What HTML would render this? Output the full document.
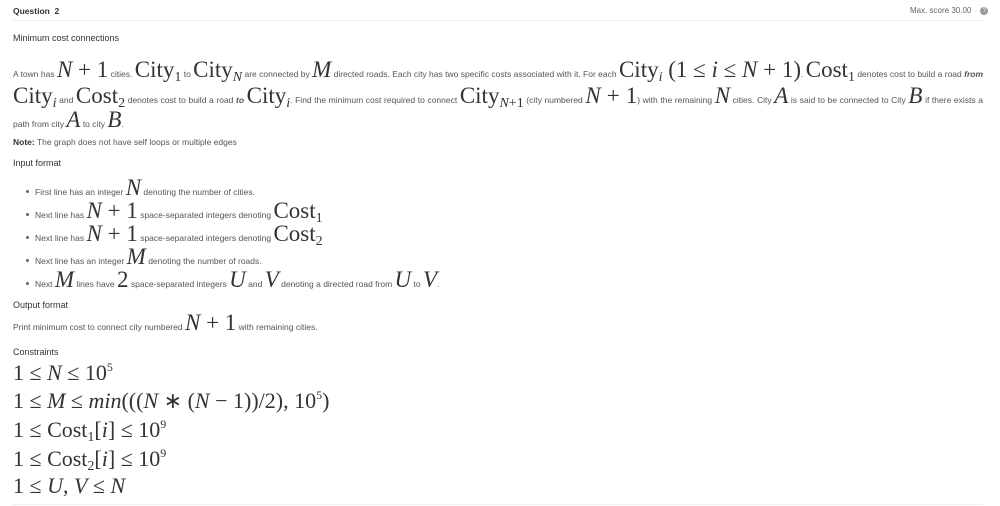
<!DOCTYPE html>
<html><head><meta charset="utf-8"><style>
body{margin:0;width:1000px;height:506px;background:#fff;position:relative;overflow:hidden;font-family:"Liberation Sans",sans-serif;color:#555;}
.a{position:absolute;white-space:nowrap;font-size:8.5px;line-height:28px;}
.m{font-family:"Liberation Serif",serif;font-size:23px;color:#333;}
.i{font-style:italic}
sub{font-size:14px;vertical-align:-4px;line-height:0}
sup{font-size:12px;vertical-align:9px;line-height:0}
.h{font-size:9px;color:#333}
.b{display:inline-block;width:3px;height:3px;border-radius:50%;background:#666;margin:0 6px 2px 26px;vertical-align:middle}
.c{position:absolute;left:13px;font-family:"Liberation Serif",serif;font-size:22px;color:#333;white-space:nowrap;line-height:28px}
</style></head><body>
<div class="a h" style="left:13px;top:-3px;font-weight:bold;font-size:8.5px">Question&nbsp; 2</div>
<div class="a" style="left:910px;top:-3px;color:#666;font-size:8px">Max. score 30.00 &nbsp; &nbsp;<span style="display:inline-block;width:8px;height:8px;border-radius:50%;background:#999;color:#fff;font-size:6px;line-height:8px;text-align:center;vertical-align:middle">?</span></div>
<div style="position:absolute;left:13px;top:20px;width:970px;height:1px;background:#eee"></div>
<div class="a h" style="left:13px;top:24px">Minimum cost connections</div>
<div class="a" style="left:13px;top:56px;width:970px;text-align:justify;text-align-last:justify">A town has <span class="m"><span class="i">N</span> + 1</span> cities. <span class="m">City<sub>1</sub></span> to <span class="m">City<sub class="i">N</sub></span> are connected by <span class="m i">M</span> directed roads. Each city has two specific costs associated with it. For each <span class="m">City<sub class="i">i</sub> (1 ≤ <span class="i">i</span> ≤ <span class="i">N</span> + 1)</span>. <span class="m">Cost<sub>1</sub></span> denotes cost to build a road <b><i>from</i></b></div>
<div class="a" style="left:13px;top:82px;width:970px;text-align:justify;text-align-last:justify"><span class="m">City<sub class="i">i</sub></span> and <span class="m">Cost<sub>2</sub></span> denotes cost to build a road <b><i>to</i></b> <span class="m">City<sub class="i">i</sub></span>. Find the minimum cost required to connect <span class="m">City<sub><span class="i">N</span>+1</sub></span> (city numbered <span class="m"><span class="i">N</span> + 1</span>) with the remaining <span class="m i">N</span> cities. City <span class="m i">A</span> is said to be connected to City <span class="m i">B</span> if there exists a</div>
<div class="a" style="left:13px;top:106px">path from city <span class="m i">A</span> to city <span class="m i">B</span>.</div>
<div class="a" style="left:13px;top:128px"><b style="color:#333">Note:</b> The graph does not have self loops or multiple edges</div>
<div class="a h" style="left:13px;top:149px">Input format</div>
<div class="a" style="left:0;top:174px"><span class="b"></span>First line has an integer <span class="m i">N</span> denoting the number of cities.</div>
<div class="a" style="left:0;top:197px"><span class="b"></span>Next line has <span class="m"><span class="i">N</span> + 1</span> space-separated integers denoting <span class="m">Cost<sub>1</sub></span></div>
<div class="a" style="left:0;top:220px"><span class="b"></span>Next line has <span class="m"><span class="i">N</span> + 1</span> space-separated integers denoting <span class="m">Cost<sub>2</sub></span></div>
<div class="a" style="left:0;top:243px"><span class="b"></span>Next line has an integer <span class="m i">M</span> denoting the number of roads.</div>
<div class="a" style="left:0;top:266px"><span class="b"></span>Next <span class="m i">M</span> lines have <span class="m">2</span> space-separated integers <span class="m i">U</span> and <span class="m i">V</span> denoting a directed road from <span class="m i">U</span> to <span class="m i">V</span>.</div>
<div class="a h" style="left:13px;top:291px">Output format</div>
<div class="a" style="left:13px;top:309px">Print minimum cost to connect city numbered <span class="m"><span class="i">N</span> + 1</span> with remaining cities.</div>
<div class="a h" style="left:13px;top:338px">Constraints</div>
<div class="c" style="top:359px">1 ≤ <i>N</i> ≤ 10<sup>5</sup></div>
<div class="c" style="top:387px">1 ≤ <i>M</i> ≤ <i>min</i>(((<i>N</i> ∗ (<i>N</i> − 1))/2), 10<sup>5</sup>)</div>
<div class="c" style="top:416px">1 ≤ Cost<sub>1</sub>[<i>i</i>] ≤ 10<sup>9</sup></div>
<div class="c" style="top:445px">1 ≤ Cost<sub>2</sub>[<i>i</i>] ≤ 10<sup>9</sup></div>
<div class="c" style="top:472px">1 ≤ <i>U</i>, <i>V</i> ≤ <i>N</i></div>
<div style="position:absolute;left:13px;top:504px;width:970px;height:1px;background:#eee"></div>
</body></html>
